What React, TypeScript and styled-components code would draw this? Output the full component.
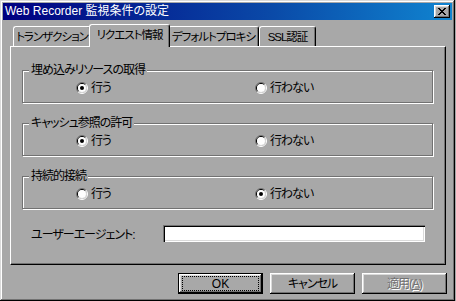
import styled, { createGlobalStyle } from "styled-components";

const face = "#a8a8a8";
const shadow = "#727272";
const light = "#dadada";

const GlobalStyle = createGlobalStyle`
  html, body {
    margin: 0;
    padding: 0;
    background: ${face};
  }
  body {
    font-family: "Liberation Sans", "Noto Sans CJK JP", sans-serif;
    font-size: 12px;
    font-feature-settings: "palt";
    letter-spacing: -1px;
    color: #000;
  }
`;

const Window = styled.div`
  width: 455px;
  height: 301px;
  box-sizing: border-box;
  padding: 3px;
  background: ${face};
  box-shadow: inset -1px -1px #000, inset 1px 1px ${light}, inset -2px -2px ${shadow}, inset 2px 2px #fff;
  display: flex;
  flex-direction: column;
`;

const TitleBar = styled.div`
  height: 17px;
  display: flex;
  align-items: center;
  justify-content: space-between;
  padding: 0 2px;
  background: linear-gradient(90deg, #000080 0%, #0a4aa8 60%, #1084d0 100%);
  color: #fff;
  line-height: 17px;
  letter-spacing: 0;
`;

const TitleText = styled.span`
  white-space: nowrap;
`;

const CloseButton = styled.div`
  width: 16px;
  height: 13px;
  display: flex;
  align-items: center;
  justify-content: center;
  background: ${face};
  box-shadow: inset -1px -1px #000, inset 1px 1px #fff, inset -2px -2px ${shadow}, inset 2px 2px ${light};
`;

const Body = styled.div`
  padding: 4px 0 0 7px;
  display: flex;
  flex-direction: column;
`;

const TabRow = styled.div`
  display: flex;
  align-items: flex-end;
  height: 22px;
  padding-left: 3px;
`;

const Tab = styled.div<{ $w: number; $active?: boolean }>`
  position: relative;
  box-sizing: border-box;
  width: ${(p) => p.$w + (p.$active ? 4 : 0)}px;
  height: ${(p) => (p.$active ? 23 : 20)}px;
  margin: 0 ${(p) => (p.$active ? -2 : 0)}px ${(p) => (p.$active ? -1 : 0)}px;
  z-index: ${(p) => (p.$active ? 1 : 0)};
  background: ${face};
  border-top: 1px solid #fff;
  border-left: 1px solid #fff;
  border-right: 1px solid #000;
  border-radius: 3px 3px 0 0;
  box-shadow: inset -1px 0 ${shadow};
  display: flex;
  align-items: ${(p) => (p.$active ? "flex-start" : "center")};
  padding-top: ${(p) => (p.$active ? 3 : 0)}px;
  justify-content: center;
  white-space: nowrap;
  font-size: 11.5px;
  line-height: 14px;
`;

const Panel = styled.div`
  width: 436px;
  height: 219px;
  box-sizing: border-box;
  border-top: 1px solid #fff;
  border-left: 1px solid #fff;
  border-right: 1px solid #000;
  border-bottom: 1px solid #000;
  box-shadow: inset -1px -1px ${shadow};
  padding: 23px 12px 0 11px;
  display: flex;
  flex-direction: column;
`;

const Group = styled.div<{ $gap: number }>`
  position: relative;
  box-sizing: border-box;
  height: 33px;
  margin-bottom: ${(p) => p.$gap}px;
  border: 1px solid ${shadow};
  box-shadow: inset 1px 1px #fff, 1px 1px #fff;
  display: flex;
  align-items: center;
  padding: 2px 0 0 53px;
`;

const Legend = styled.span`
  position: absolute;
  top: -8px;
  left: 6px;
  padding: 0 2px;
  background: ${face};
  line-height: 14px;
  white-space: nowrap;
`;

const RadioItem = styled.label<{ $w?: number }>`
  display: flex;
  align-items: center;
  gap: 3px;
  width: ${(p) => (p.$w ? `${p.$w}px` : "auto")};
  line-height: 14px;
  white-space: nowrap;
`;

const FieldRow = styled.div`
  display: flex;
  align-items: center;
  margin-top: -4px;
  padding-left: 9px;
`;

const FieldLabel = styled.span`
  width: 132px;
  white-space: nowrap;
`;

const TextBox = styled.div`
  width: 262px;
  height: 17px;
  box-sizing: border-box;
  background: #fff;
  box-shadow: inset 1px 1px ${shadow}, inset 2px 2px #000, inset -1px -1px #fff, inset -2px -2px ${light};
`;

const ButtonRow = styled.div`
  width: 437px;
  display: flex;
  justify-content: flex-end;
  gap: 7px;
  margin-top: 8px;
`;

const Button = styled.div<{ $default?: boolean; $disabled?: boolean }>`
  width: 85px;
  height: 21px;
  box-sizing: border-box;
  display: flex;
  align-items: center;
  justify-content: center;
  background: ${face};
  border: ${(p) => (p.$default ? "1px solid #000" : "none")};
  box-shadow: inset -1px -1px #000, inset 1px 1px #fff, inset -2px -2px ${shadow}, inset 2px 2px ${light};
  color: ${(p) => (p.$disabled ? shadow : "#000")};
  text-shadow: ${(p) => (p.$disabled ? "1px 1px #fff" : "none")};
  line-height: 14px;
  white-space: nowrap;
`;

const Focus = styled.span`
  box-sizing: border-box;
  width: 77px;
  height: 15px;
  border: 1px dotted #000;
  display: flex;
  align-items: center;
  justify-content: center;
  letter-spacing: 0;
`;

const Radio = ({ checked }: { checked?: boolean }) => (
  <svg width="12" height="12" viewBox="0 0 12 12">
    <path d="M2.1 9.9 A5.5 5.5 0 0 1 9.9 2.1" fill="none" stroke={shadow} />
    <path d="M9.9 2.1 A5.5 5.5 0 0 1 2.1 9.9" fill="none" stroke="#fff" />
    <path d="M2.8 9.2 A4.5 4.5 0 0 1 9.2 2.8" fill="none" stroke="#000" />
    <path d="M9.2 2.8 A4.5 4.5 0 0 1 2.8 9.2" fill="none" stroke={light} />
    <circle cx="6" cy="6" r="4" fill="#fff" />
    {checked && <circle cx="6" cy="6" r="2" fill="#000" />}
  </svg>
);

const CloseGlyph = () => (
  <svg width="8" height="7" viewBox="0 0 8 7" shapeRendering="crispEdges">
    <rect x="0" y="0" width="2" height="1" />
    <rect x="6" y="0" width="2" height="1" />
    <rect x="1" y="1" width="2" height="1" />
    <rect x="5" y="1" width="2" height="1" />
    <rect x="2" y="2" width="4" height="1" />
    <rect x="3" y="3" width="2" height="1" />
    <rect x="2" y="4" width="4" height="1" />
    <rect x="1" y="5" width="2" height="1" />
    <rect x="5" y="5" width="2" height="1" />
    <rect x="0" y="6" width="2" height="1" />
    <rect x="6" y="6" width="2" height="1" />
  </svg>
);

const groups = [
  { title: "埋め込みリソースの取得", on: true },
  { title: "キャッシュ参照の許可", on: true },
  { title: "持続的接続", on: false },
];

const App = () => (
  <>
    <GlobalStyle />
    <Window>
      <TitleBar>
        <TitleText>Web Recorder 監視条件の設定</TitleText>
        <CloseButton>
          <CloseGlyph />
        </CloseButton>
      </TitleBar>
      <Body>
        <TabRow>
          <Tab $w={78}>トランザクション</Tab>
          <Tab $w={77} $active>リクエスト情報</Tab>
          <Tab $w={91}>デフォルトプロキシ</Tab>
          <Tab $w={57}>SSL認証</Tab>
        </TabRow>
        <Panel>
          {groups.map((g) => (
            <Group key={g.title} $gap={20}>
              <Legend>{g.title}</Legend>
              <RadioItem $w={179}>
                <Radio checked={g.on} />
                行う
              </RadioItem>
              <RadioItem>
                <Radio checked={!g.on} />
                行わない
              </RadioItem>
            </Group>
          ))}
          <FieldRow>
            <FieldLabel>ユーザーエージェント:</FieldLabel>
            <TextBox />
          </FieldRow>
        </Panel>
        <ButtonRow>
          <Button $default>
            <Focus>OK</Focus>
          </Button>
          <Button>キャンセル</Button>
          <Button $disabled>
            <span>
              適用(<u>A</u>)
            </span>
          </Button>
        </ButtonRow>
      </Body>
    </Window>
  </>
);

export default App;
